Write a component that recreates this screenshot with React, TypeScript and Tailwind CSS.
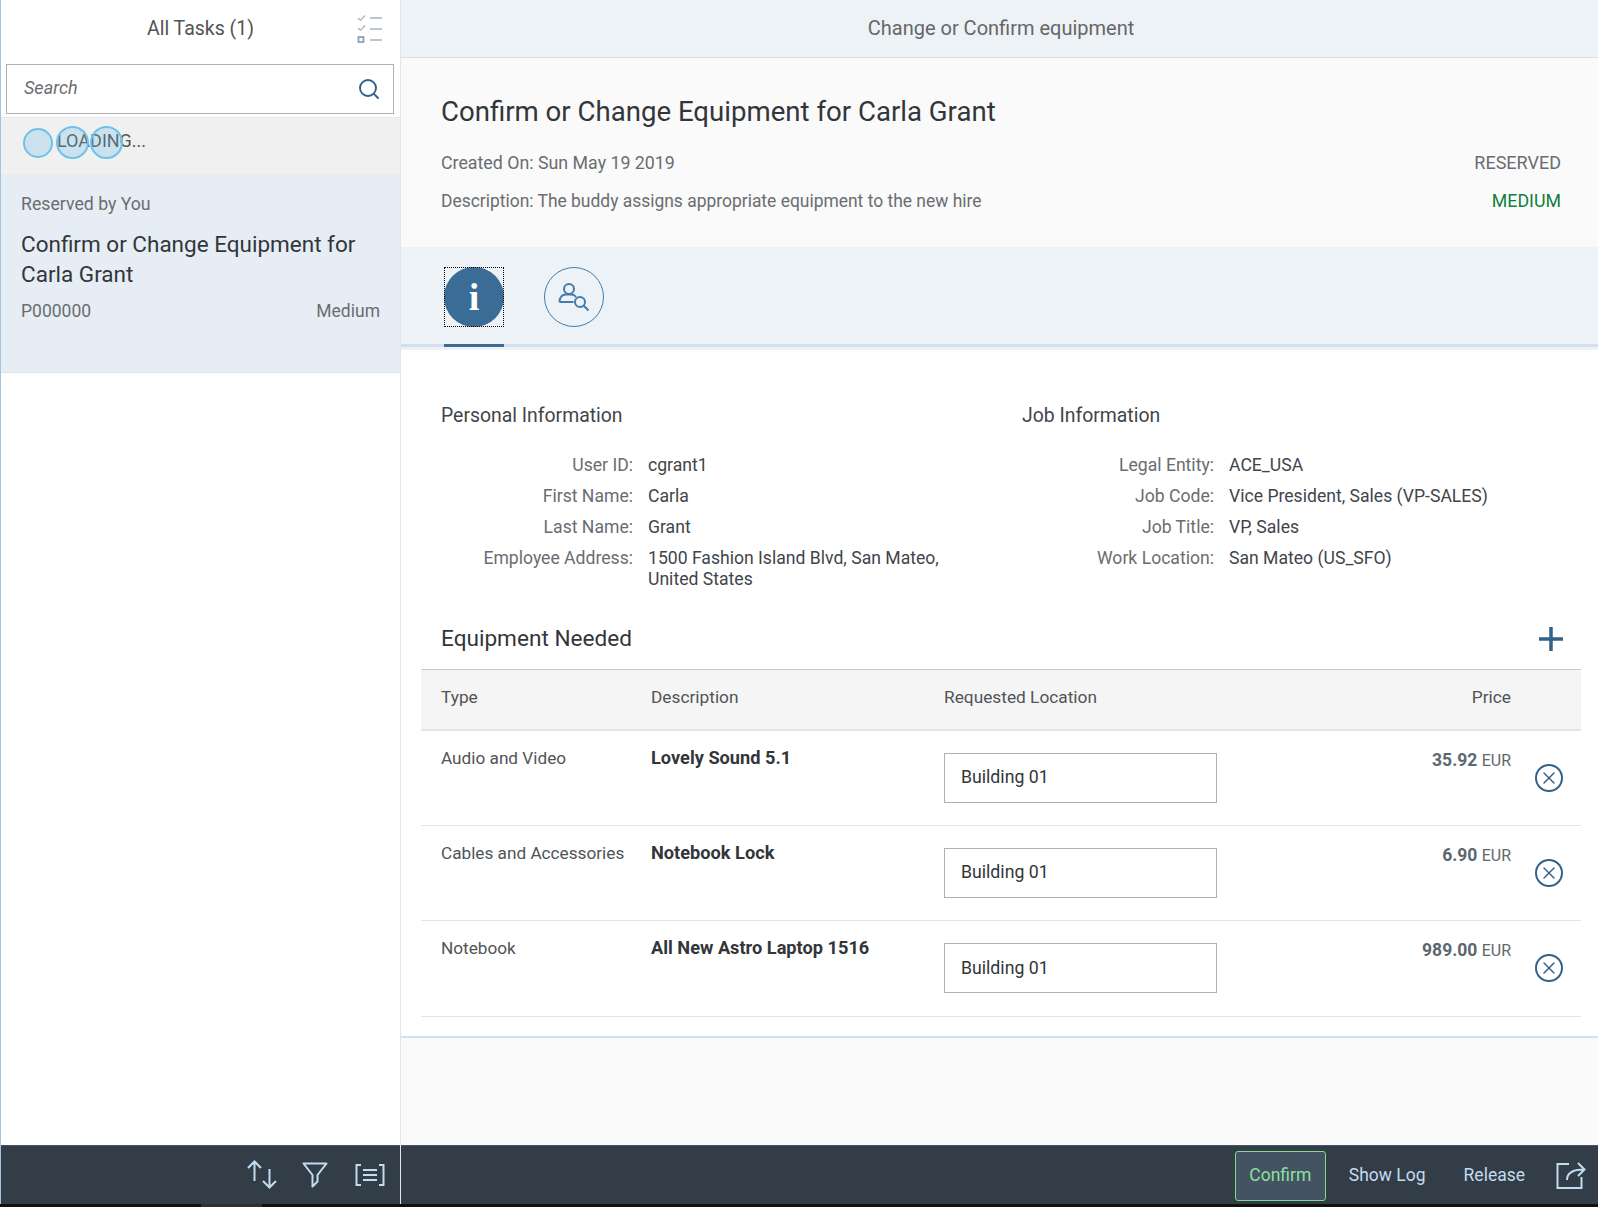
import { Search, X } from "lucide-react";

const font = { fontFamily: "Roboto, 'Liberation Sans', sans-serif" };

const personal = [
  { label: "User ID:", value: "cgrant1" },
  { label: "First Name:", value: "Carla" },
  { label: "Last Name:", value: "Grant" },
  { label: "Employee Address:", value: "1500 Fashion Island Blvd, San Mateo, United States" },
];

const job = [
  { label: "Legal Entity:", value: "ACE_USA" },
  { label: "Job Code:", value: "Vice President, Sales (VP-SALES)" },
  { label: "Job Title:", value: "VP, Sales" },
  { label: "Work Location:", value: "San Mateo (US_SFO)" },
];

const equipment = [
  { type: "Audio and Video", name: "Lovely Sound 5.1", price: "35.92" },
  { type: "Cables and Accessories", name: "Notebook Lock", price: "6.90" },
  { type: "Notebook", name: "All New Astro Laptop 1516", price: "989.00" },
];

function TaskListIcon() {
  return (
    <svg width="26" height="30" viewBox="0 0 26 30" fill="none" stroke="#a9b4be" strokeWidth="1.6">
      <path d="M1 4l2.5 2.5L8 1.5M1 14l2.5 2.5L8 11.5" strokeWidth="1.2" />
      <path d="M13 4h12M13 15h12M13 26h12" />
      <rect x="1.5" y="23" width="5" height="5" strokeWidth="1.8" stroke="#8fa3b5" />
    </svg>
  );
}

function PersonSearchIcon() {
  return (
    <svg width="32" height="30" viewBox="0 0 32 30" fill="none" stroke="#427cac" strokeWidth="2">
      <circle cx="11" cy="7" r="5" />
      <path d="M1.500 20c0-5 3-7.500 6-7.500h6c2 0 3.500 1 4.500 2.500M1.500 20h14" />
      <circle cx="22" cy="20" r="5" />
      <path d="M25.500 23.500l5 5" />
    </svg>
  );
}

function SortIcon() {
  return (
    <svg width="30" height="30" viewBox="0 0 30 30" fill="none" stroke="#c2dcf0" strokeWidth="2">
      <path d="M1 8l6.500-6.500L14 8M7.500 2v19M16 21l6.500 6.500L29 21M22.500 9v18" />
    </svg>
  );
}

function FilterIcon() {
  return (
    <svg width="26" height="26" viewBox="0 0 26 26" fill="none" stroke="#c2dcf0" strokeWidth="2">
      <path d="M1.500 1.500h23L15.500 13v6.500l-5 5V13z" strokeLinejoin="round" />
    </svg>
  );
}

function GroupIcon() {
  return (
    <svg width="30" height="22" viewBox="0 0 30 22" fill="none" stroke="#c2dcf0" strokeWidth="2">
      <path d="M6 1H1.500v20H6M24 1h4.500v20H24M8 6h14M8 11h14M8 16h14" />
    </svg>
  );
}

function ShareIcon() {
  return (
    <svg width="30" height="28" viewBox="0 0 30 28" fill="none" stroke="#c2dcf0" strokeWidth="2">
      <path d="M13 3H1.500v24h24v-11" />
      <path d="M11 19c0-7 5-10.500 17-10.500M22 2l6.500 6.500L22 15" />
    </svg>
  );
}

function InfoBlock({ title, rows }: { title: string; rows: { label: string; value: string }[] }) {
  return (
    <div>
      <h3 className="text-[19.4px] leading-[26px] text-[#41454a]">{title}</h3>
      <div className="mt-[26px] flex flex-col gap-[10px]">
        {rows.map((r) => (
          <div key={r.label} className="grid grid-cols-[192px_1fr] gap-x-[15px] text-[17.6px] leading-[21px]">
            <span className="text-right text-[#6a6d70]">{r.label}</span>
            <span className="text-[#41454a] max-w-[320px]">{r.value}</span>
          </div>
        ))}
      </div>
    </div>
  );
}

export default function App() {
  return (
    <div style={font} className="w-[1598px] h-[1207px] flex flex-col overflow-hidden bg-black text-[17.5px]">
      <div className="flex h-[1204px]">
        {/* master list */}
        <aside className="w-[401px] shrink-0 flex flex-col bg-white border-l border-l-[#a9c3dc] border-r border-r-[#e5e5e5]">
          <div className="h-[57px] flex items-center relative">
            <span className="w-full text-center text-[19.5px] text-[#515456]">All Tasks (1)</span>
            <span className="absolute left-[356px] top-[14px]"><TaskListIcon /></span>
          </div>
          <div className="ml-[5px] mr-[6px] mt-[7px] h-[50px] border border-[#b0b0b0] flex items-center justify-between pl-[17px] pr-[12px]">
            <span className="italic text-[18px] text-[#6a6d70] pb-[3px]">Search</span>
            <Search className="w-[24px] h-[24px] text-[#2f5f8a]" strokeWidth={1.9} />
          </div>
          <div className="mt-[3px] h-[57px] bg-[#f0f0f0] relative border-t border-[#e8e8e8]">
            <span className="absolute left-[56px] top-[9px] text-[18px] text-[#515456]">LOADING...</span>
            <span className="absolute left-[22px] top-[10px] w-[30px] h-[30px] rounded-full bg-[#5db7e6]/25 border-2 border-[#6fc1ea]" />
            <span className="absolute left-[55px] top-[8px] w-[33px] h-[33px] rounded-full bg-[#5db7e6]/25 border-2 border-[#6fc1ea]" />
            <span className="absolute left-[89px] top-[8px] w-[33px] h-[33px] rounded-full bg-[#5db7e6]/25 border-2 border-[#6fc1ea]" />
          </div>
          <div className="h-[199px] bg-[#e6edf5] border-b border-[#e0e4e8] px-[20px] pt-[18px]">
            <div className="text-[17.7px] text-[#6a6d70] leading-[24px]">Reserved by You</div>
            <div className="mt-[13px] text-[22.5px] leading-[30px] text-[#32363a]">Confirm or Change Equipment for Carla Grant</div>
            <div className="mt-[10px] flex justify-between text-[#6a6d70] leading-[24px]">
              <span>P000000</span>
              <span>Medium</span>
            </div>
          </div>
          <div className="flex-1" />
          <div className="h-[59px] bg-[#333d47] border-t border-[#4a545e] flex items-center justify-end pr-[15px]">
            <SortIcon />
            <span className="ml-[25px] mr-[27px]"><FilterIcon /></span>
            <GroupIcon />
          </div>
        </aside>

        {/* detail */}
        <main className="flex-1 flex flex-col bg-[#fafafa]">
          <div className="h-[58px] shrink-0 bg-[#edf2f7] border-b border-[#d5e0ea] flex items-center justify-center text-[20px] text-[#666666] pb-[2px]">
            Change or Confirm equipment
          </div>
          <div className="h-[189px] shrink-0 px-[40px] pt-[37px]">
            <h1 className="text-[27.6px] leading-[34px] text-[#32363a]">Confirm or Change Equipment for Carla Grant</h1>
            <div className="mt-[22px] flex justify-between leading-[24px] text-[#6a6d70]">
              <span className="text-[17.8px]">Created On: Sun May 19 2019</span>
              <span className="text-[18px]">RESERVED</span>
            </div>
            <div className="mt-[14px] flex justify-between leading-[24px] text-[#6a6d70]">
              <span className="text-[17.45px]">Description: The buddy assigns appropriate equipment to the new hire</span>
              <span className="text-[#107e3e] text-[17.8px]">MEDIUM</span>
            </div>
          </div>
          <div className="h-[103px] shrink-0 bg-[#edf2f7] pl-[43px] flex gap-[40px] relative">
            <div className="absolute left-0 right-0 bottom-[3px] h-[3px] bg-[#d3dfec]" />
            <div className="relative w-[60px] h-[100px] pt-[20px]">
              <div className="w-[60px] h-[60px] outline-1 -outline-offset-1 outline-dotted outline-black">
                <div className="w-[60px] h-[60px] rounded-full bg-[#3a6c96] flex items-center justify-center text-white text-[38px] font-bold" style={{ fontFamily: "'Liberation Serif', serif" }}>
                  i
                </div>
              </div>
              <div className="absolute left-0 right-0 bottom-0 h-[3px] bg-[#3a6c96]" />
            </div>
            <div className="mt-[20px] w-[60px] h-[60px] rounded-full border border-[#427cac] flex items-center justify-center">
              <PersonSearchIcon />
            </div>
          </div>
          <div className="bg-white h-[688px] shrink-0 border-b-[2px] border-[#d3e2f0] px-[20px]">
            <div className="grid grid-cols-[581px_1fr] pl-[20px] pt-[53px] h-[233px]">
              <InfoBlock title="Personal Information" rows={personal} />
              <InfoBlock title="Job Information" rows={job} />
            </div>
            <div className="h-[86px] pl-[20px] pr-[17px] pt-[42px] flex justify-between items-start">
              <h2 className="text-[22.6px] leading-[28px] text-[#32363a]">Equipment Needed</h2>
              <svg className="mt-[1px]" width="26" height="26" viewBox="0 0 26 26" stroke="#346187" strokeWidth="3.5"><path d="M13 1v24M1 13h24" /></svg>
            </div>
            <div className="w-[1160px] border-t border-[#c8c8c8]">
              <div className="h-[61px] bg-[#f5f5f5] border-b-2 border-[#e5e5e5] grid grid-cols-[230px_293px_495px_72px_70px] items-center text-[#515456] text-[17.3px] pb-[4px]">
                <span className="pl-[20px]">Type</span>
                <span>Description</span>
                <span>Requested Location</span>
                <span className="whitespace-nowrap justify-self-end">Price</span>
                <span />
              </div>
              {equipment.map((e) => (
                <div key={e.name} className="h-[95.2px] border-b border-[#e5e5e5] grid grid-cols-[230px_293px_495px_72px_70px] text-[#515456] pt-[15px]">
                  <span className="pl-[20px] leading-[24px] text-[17.2px] whitespace-nowrap">{e.type}</span>
                  <span className="font-bold text-[18.2px] leading-[24px] text-[#32363a]">{e.name}</span>
                  <div className="pt-[7px]">
                    <div className="w-[273px] h-[50px] border border-[#b0b0b0] bg-white flex items-center pl-[16px] pb-[1px] text-[17.7px] text-[#32363a]">Building 01</div>
                  </div>
                  <span className="justify-self-end whitespace-nowrap leading-[24px] mt-[2px]">
                    <b className="text-[#5c6770]">{e.price}</b> <span className="text-[16px] text-[#666666]">EUR</span>
                  </span>
                  <div className="pt-[18px] pl-[24px]">
                    <span className="w-[28px] h-[28px] rounded-full border-2 border-[#346187] flex items-center justify-center">
                      <X className="w-[20px] h-[20px] text-[#346187]" strokeWidth={1.7} />
                    </span>
                  </div>
                </div>
              ))}
            </div>
          </div>
          <div className="flex-1" />
          <div className="h-[59px] shrink-0 bg-[#333d47] border-t border-[#4a545e] flex items-center justify-end pr-[15px] text-[#c2dcf0]">
            <button className="w-[91px] h-[50px] mt-[1px] rounded-[3px] border border-[#7fdb8f] bg-[#435362] text-[#8ae0a0]">Confirm</button>
            <span className="ml-[23px]">Show Log</span>
            <span className="ml-[38px]">Release</span>
            <span className="ml-[31px]"><ShareIcon /></span>
          </div>
        </main>
      </div>
      <div className="h-[3px] bg-[#111111]">
        <div className="ml-[201px] w-[61px] h-full bg-[#2f2f2f]" />
      </div>
    </div>
  );
}
